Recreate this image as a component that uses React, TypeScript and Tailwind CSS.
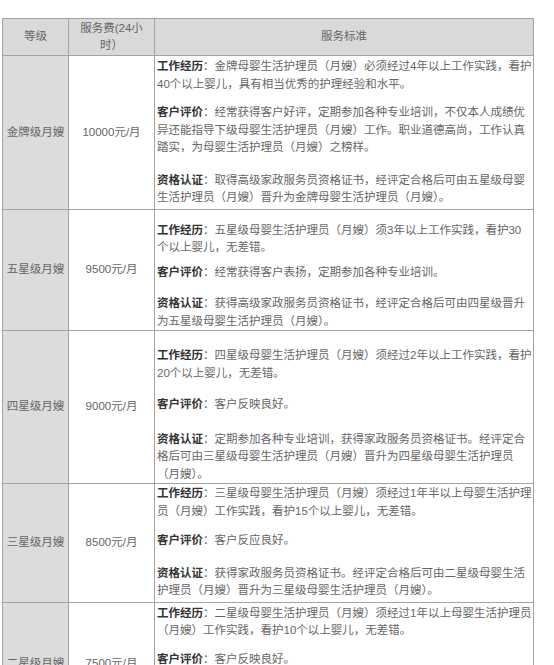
type Para = { label: string; lines: string[]; mt: string };

type Row = {
  grade: string;
  price: string;
  pad: string;
  paras: Para[];
};

const rows: Row[] = [
  {
    grade: "金牌级月嫂",
    price: "10000元/月",
    pad: "pt-[2px] pb-[2px]",
    paras: [
      {
        label: "工作经历",
        mt: "mt-0",
        lines: ["：金牌母婴生活护理员（月嫂）必须经过4年以上工作实践，看护", "40个以上婴儿，具有相当优秀的护理经验和水平。"]
      },
      {
        label: "客户评价",
        mt: "mt-[11px]",
        lines: [
          "：经常获得客户好评，定期参加各种专业培训，不仅本人成绩优",
          "异还能指导下级母婴生活护理员（月嫂）工作。职业道德高尚，工作认真",
          "踏实，为母婴生活护理员（月嫂）之榜样。"
        ]
      },
      {
        label: "资格认证",
        mt: "mt-[15px]",
        lines: ["：取得高级家政服务员资格证书，经评定合格后可由五星级母婴", "生活护理员（月嫂）晋升为金牌母婴生活护理员（月嫂）。"]
      }
    ]
  },
  {
    grade: "五星级月嫂",
    price: "9500元/月",
    pad: "pt-[12px] pb-0",
    paras: [
      {
        label: "工作经历",
        mt: "mt-0",
        lines: ["：五星级母婴生活护理员（月嫂）须3年以上工作实践，看护30", "个以上婴儿，无差错。"]
      },
      {
        label: "客户评价",
        mt: "mt-[7px]",
        lines: ["：经常获得客户表扬，定期参加各种专业培训。"]
      },
      {
        label: "资格认证",
        mt: "mt-[14px]",
        lines: ["：获得高级家政服务员资格证书，经评定合格后可由四星级晋升", "为五星级母婴生活护理员（月嫂）。"]
      }
    ]
  },
  {
    grade: "四星级月嫂",
    price: "9000元/月",
    pad: "pt-[16px] pb-0",
    paras: [
      {
        label: "工作经历",
        mt: "mt-0",
        lines: ["：四星级母婴生活护理员（月嫂）须经过2年以上工作实践，看护", "20个以上婴儿，无差错。"]
      },
      {
        label: "客户评价",
        mt: "mt-[14px]",
        lines: ["：客户反映良好。"]
      },
      {
        label: "资格认证",
        mt: "mt-[17px]",
        lines: [
          "：定期参加各种专业培训，获得家政服务员资格证书。经评定合",
          "格后可由三星级母婴生活护理员（月嫂）晋升为四星级母婴生活护理员",
          "（月嫂）。"
        ]
      }
    ]
  },
  {
    grade: "三星级月嫂",
    price: "8500元/月",
    pad: "pt-[1px] pb-[2px]",
    paras: [
      {
        label: "工作经历",
        mt: "mt-0",
        lines: ["：三星级母婴生活护理员（月嫂）须经过1年半以上母婴生活护理", "员（月嫂）工作实践，看护15个以上婴儿，无差错。"]
      },
      {
        label: "客户评价",
        mt: "mt-[11.5px]",
        lines: ["：客户反应良好。"]
      },
      {
        label: "资格认证",
        mt: "mt-[15.5px]",
        lines: ["：获得家政服务员资格证书。经评定合格后可由二星级母婴生活", "护理员（月嫂）晋升为三星级母婴生活护理员（月嫂）。"]
      }
    ]
  },
  {
    grade: "二星级月嫂",
    price: "7500元/月",
    pad: "pt-[2px] pb-[6px]",
    paras: [
      {
        label: "工作经历",
        mt: "mt-0",
        lines: ["：二星级母婴生活护理员（月嫂）须经过1年以上母婴生活护理员", "（月嫂）工作实践，看护10个以上婴儿，无差错。"]
      },
      {
        label: "客户评价",
        mt: "mt-[11.5px]",
        lines: ["：客户反映良好。"]
      },
      {
        label: "资格认证",
        mt: "mt-[15.5px]",
        lines: ["：获得家政服务员资格证书。经评定合格后可由一星级母婴生活", "护理员（月嫂）晋升为二星级母婴生活护理员（月嫂）。"]
      }
    ]
  }
];

const cell = "border border-[#a3a3a3]";

const App = () => {
  return (
    <div
      className="bg-white w-[554px] h-[665px] overflow-hidden text-[11.5px] leading-[17.5px] text-[#666]"
      style={{ fontFamily: '"Liberation Sans", "Noto Sans CJK SC", sans-serif' }}
    >
      <table className="mt-[18px] ml-[2px] w-[531px] table-fixed border-collapse">
        <colgroup>
          <col className="w-[66px]" />
          <col className="w-[86px]" />
          <col className="w-[379px]" />
        </colgroup>
        <thead>
          <tr className="bg-[#d9d9d9] h-[37px]">
            <th className={`${cell} font-normal text-center align-middle`}>等级</th>
            <th className={`${cell} font-normal text-center align-middle leading-[17px]`}>
              服务费(24小
              <br />
              时）
            </th>
            <th className={`${cell} font-normal text-center align-middle`}>服务标准</th>
          </tr>
        </thead>
        <tbody>
          {rows.map((row, index) => (
            <tr key={index}>
              <td className={`${cell} bg-[#dcdcdc] text-center align-middle whitespace-nowrap`}>{row.grade}</td>
              <td className={`${cell} text-center align-middle whitespace-nowrap`}>{row.price}</td>
              <td className={`${cell} align-top pl-[2px] pr-0 ${row.pad}`}>
                {row.paras.map((p, i) => (
                  <p key={i} className={`${p.mt} whitespace-nowrap`}>
                    <b className="font-bold text-[#333]">{p.label}</b>
                    {p.lines.map((line, j) => (
                      <span key={j}>
                        {j > 0 && <br />}
                        {line}
                      </span>
                    ))}
                  </p>
                ))}
              </td>
            </tr>
          ))}
        </tbody>
      </table>
    </div>
  );
};

export default App;
